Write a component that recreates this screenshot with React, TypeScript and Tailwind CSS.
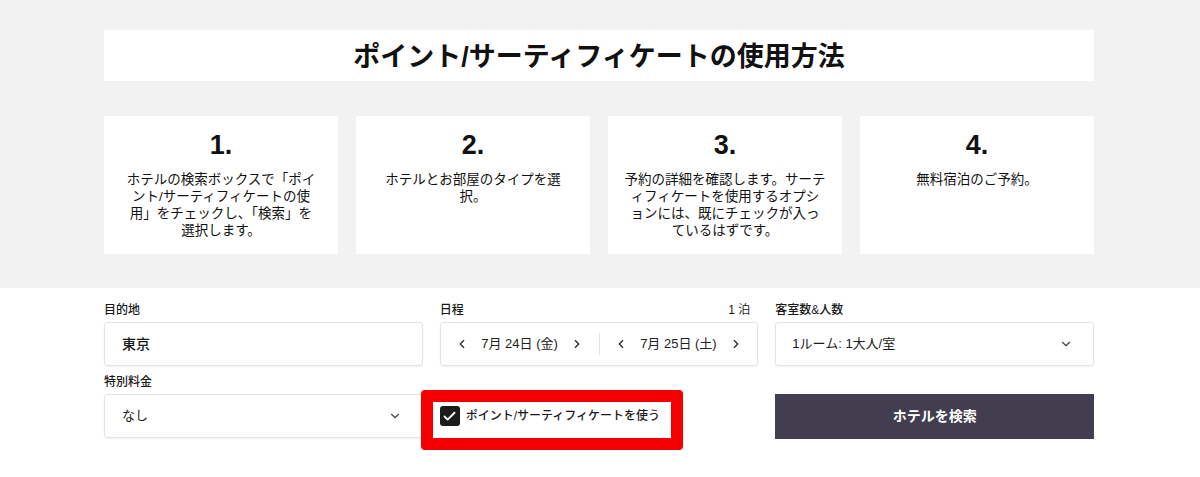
import { ChevronDown, ChevronLeft, ChevronRight, Check } from 'lucide-react';

const jp = { fontFamily: '"Liberation Sans", "Noto Sans CJK JP", sans-serif' };

// lines are kept as in the source layout
const steps = [
    { n: '1.', lines: ['ホテルの検索ボックスで「ポイ', 'ント/サーティフィケートの使', '用」をチェックし、「検索」を', '選択します。'] },
    { n: '2.', lines: ['ホテルとお部屋のタイプを選', '択。'] },
    { n: '3.', lines: ['予約の詳細を確認します。サーテ', 'ィフィケートを使用するオプシ', 'ョンには、既にチェックが入っ', 'ているはずです。'] },
    { n: '4.', lines: ['無料宿泊のご予約。'] },
];

// Single side of the date range picker
const DateSide = ({ label }: { label: string }) => (
    <div className="flex-1 flex items-center justify-between px-[14px]">
        <ChevronLeft size={14} strokeWidth={2} className="text-[#222]" />
        <span className="text-[13px] text-[#222]">{label}</span>
        <ChevronRight size={14} strokeWidth={2} className="text-[#222]" />
    </div>
);

export default function App() {
    return (
        <div className="w-[1200px] h-[477px] bg-white text-[#1a1a1a]" style={jp}>
            {/* How-to section */}
            <div className="bg-[#f2f2f2] h-[288px] pt-[30px]">
                <div className="mx-[104px] w-[990px] h-[51px] bg-white flex items-center justify-center">
                    <h2 className="text-[27px] font-bold text-[#111] mt-[3px]">
                        ポイント/サーティフィケートの使用方法
                    </h2>
                </div>
                <div className="mx-[104px] w-[990px] mt-[35px] grid grid-cols-4 gap-[18px]">
                    {steps.map((s) => (
                        <div key={s.n} className="bg-white h-[138px] flex flex-col items-center pt-[14px]">
                            <div className="text-[27px] font-bold leading-[30px] text-[#111]">{s.n}</div>
                            <div className="mt-[11px] text-[13.5px] leading-[17px] text-center text-[#111]">
                                {s.lines.map((l) => (
                                    <div key={l} className="whitespace-nowrap">{l}</div>
                                ))}
                            </div>
                        </div>
                    ))}
                </div>
            </div>

            {/* Search form */}
            <div className="mx-[104px] w-[990px] pt-[14px] grid grid-cols-3 gap-x-[17px]">
                <div>
                    <div className="text-[12px] leading-[16px] mb-[4px] font-medium">目的地</div>
                    <div className="h-[44px] border border-[#e4e4e4] rounded-[3px] shadow-[0_1px_2px_rgba(0,0,0,0.06)] flex items-center px-[17px] text-[14px] font-medium">
                        東京
                    </div>
                </div>
                <div>
                    <div className="flex justify-between text-[12px] leading-[16px] mb-[4px] font-medium pr-[8px]">
                        <span>日程</span>
                        <span className="font-normal">1 泊</span>
                    </div>
                    <div className="h-[44px] border border-[#e4e4e4] rounded-[3px] shadow-[0_1px_2px_rgba(0,0,0,0.06)] flex items-center">
                        <DateSide label="7月 24日 (金)" />
                        <div className="w-px h-[22px] bg-[#e4e4e4]" />
                        <DateSide label="7月 25日 (土)" />
                    </div>
                </div>
                <div>
                    <div className="text-[12px] leading-[16px] mb-[4px] font-medium">客室数&amp;人数</div>
                    <div className="h-[44px] border border-[#e4e4e4] rounded-[3px] shadow-[0_1px_2px_rgba(0,0,0,0.06)] flex items-center justify-between pl-[16px] pr-[20px] text-[13px]">
                        <span>1ルーム: 1大人/室</span>
                        <ChevronDown size={14} className="text-[#444]" />
                    </div>
                </div>

                <div className="mt-[8px]">
                    <div className="text-[12px] leading-[16px] mb-[4px] font-medium">特別料金</div>
                    <div className="h-[44px] border border-[#e4e4e4] rounded-[3px] shadow-[0_1px_2px_rgba(0,0,0,0.06)] flex items-center justify-between pl-[17px] pr-[20px] text-[13px]">
                        <span>なし</span>
                        <ChevronDown size={14} className="text-[#444]" />
                    </div>
                </div>
                <div className="mt-[28px] relative">
                    <div className="h-[44px] flex items-center gap-[6px]">
                        <div className="w-[20px] h-[20px] rounded-[3px] bg-[#1c1c1c] flex items-center justify-center">
                            <Check size={15} strokeWidth={3} className="text-white" />
                        </div>
                        <span className="text-[12px] font-medium">ポイント/サーティフィケートを使う</span>
                    </div>
                    {/* red highlight frame */}
                    <div className="absolute left-[-19px] top-[-4px] w-[262px] h-[60px] border-[12px] border-[#f50000] rounded-[4px] pointer-events-none" />
                </div>
                <div className="mt-[28px]">
                    <button className="w-full h-[45px] bg-[#423e50] text-white text-[14px] font-semibold">
                        ホテルを検索
                    </button>
                </div>
            </div>
        </div>
    );
}
